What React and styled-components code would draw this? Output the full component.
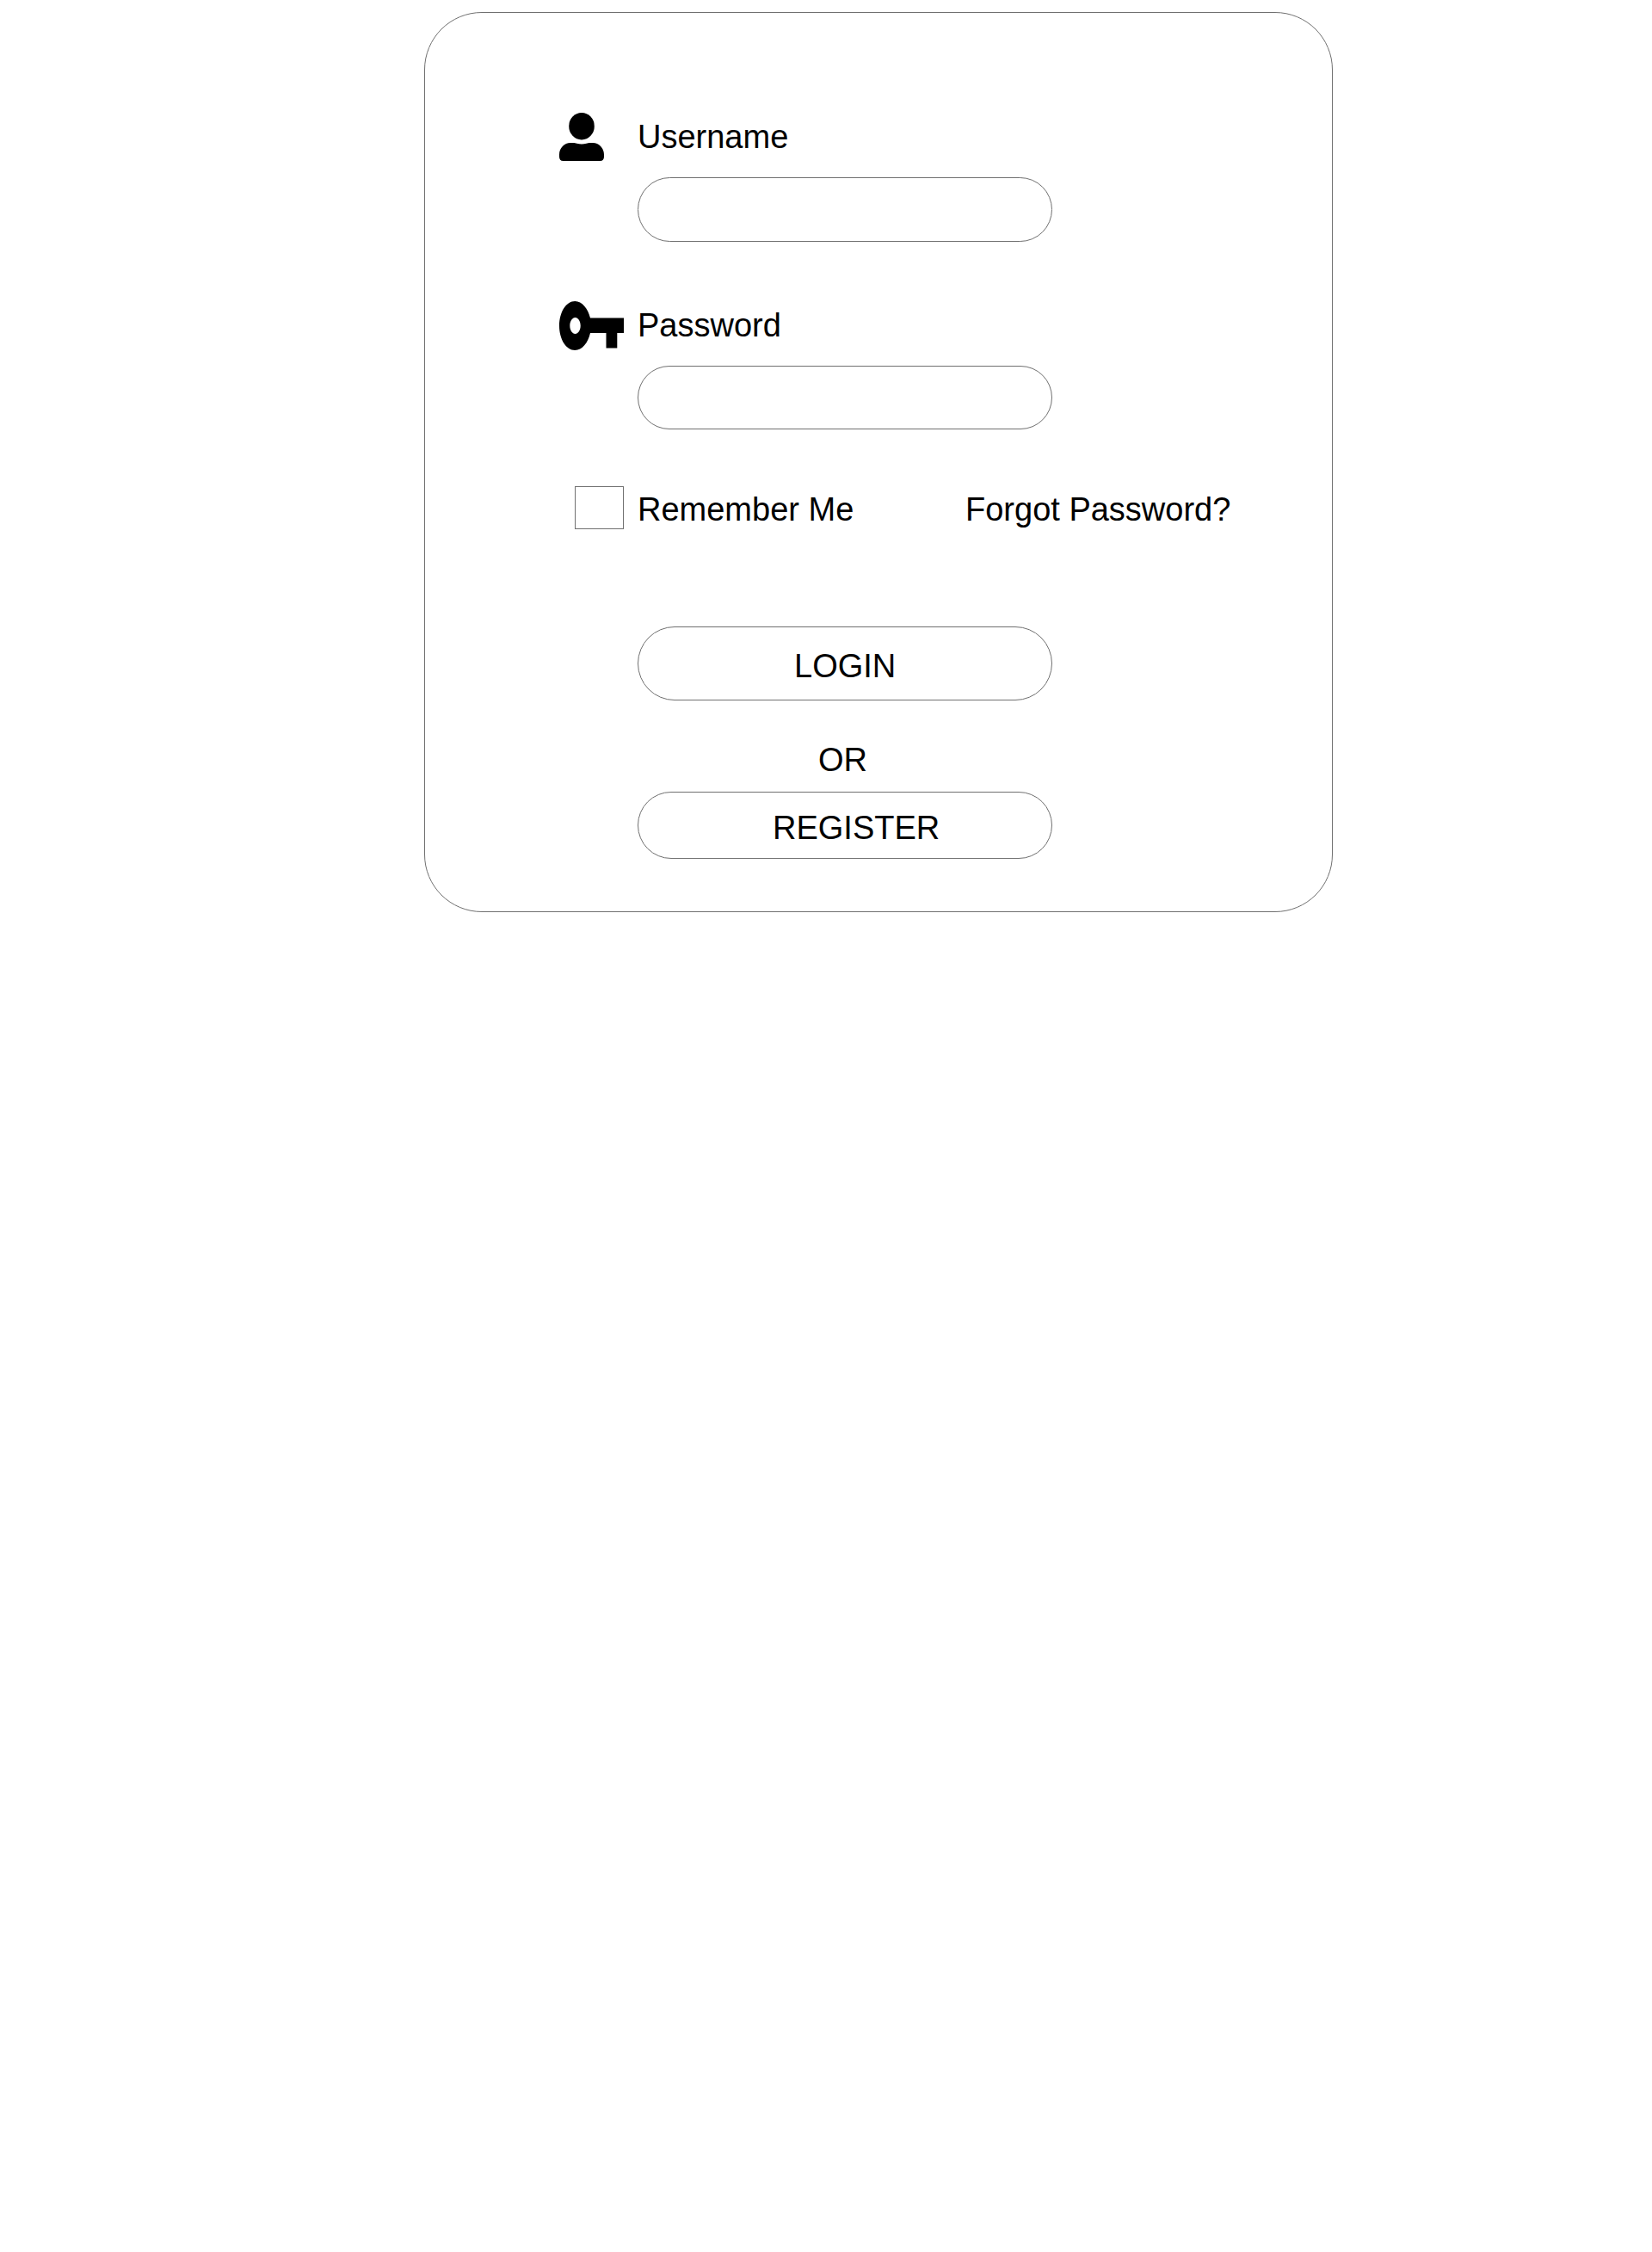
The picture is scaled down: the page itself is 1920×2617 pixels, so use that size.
import React from "react";
import styled, { createGlobalStyle } from "styled-components";

const Global = createGlobalStyle`
  * { box-sizing: border-box; }
  html { background: #fff; }
  body { margin: 0; background: #fff; }
`;

const Page = styled.main`
  display: flex;
  min-height: 2617px;
  padding: 14px 0 0 493px;
  align-items: flex-start;
  background: #fff;
  color: #000;
  font: 38px/44px "Liberation Sans", Arial, Helvetica, sans-serif;
`;

const Card = styled.form`
  display: flex;
  flex-direction: column;
  width: 1056px;
  height: 1046px;
  padding: 116px 0 0 156px;
  border: 1px solid #707070;
  border-radius: 67px;
`;

const Field = styled.div`
  display: grid;
  grid-template-columns: 91px 482px;
  grid-template-rows: 75px auto;
  margin-bottom: ${(p) => p.$after}px;
`;

const IconCell = styled.span`
  display: block;
  height: 58px;
  svg { display: block; }
`;

const Label = styled.label`
  padding-top: 6px;
  white-space: nowrap;
`;

const Input = styled.input`
  grid-column: 2;
  width: 482px;
  height: ${(p) => p.$height}px;
  padding: 0 30px;
  border: 1px solid #707070;
  border-radius: 38px;
  background: #fff;
  font: inherit;
  outline: none;
`;

const Options = styled.div`
  display: flex;
  align-items: flex-start;
  height: 50px;
  padding-left: 18px;
  margin-bottom: 113px;
`;

const Checkbox = styled.input`
  appearance: none;
  width: 57px;
  height: 50px;
  margin: 0 16px 0 0;
  border: 1px solid #707070;
  background: #fff;
`;

const OptionText = styled.label`
  width: 381px;
  padding-top: 5px;
  white-space: nowrap;
`;

const Forgot = styled.a`
  padding-top: 5px;
  color: inherit;
  text-decoration: none;
  white-space: nowrap;
`;

const Actions = styled.div`
  display: flex;
  flex-direction: column;
  width: 482px;
  margin-left: 91px;
`;

const Button = styled.button`
  display: flex;
  align-items: flex-start;
  width: 482px;
  height: ${(p) => p.$height}px;
  padding: ${(p) => p.$top}px 0 0 ${(p) => p.$left}px;
  border: 1px solid #707070;
  border-radius: 43px;
  background: #fff;
  color: inherit;
  font: inherit;
  text-align: left;
`;

const Or = styled.span`
  height: 106px;
  padding: 47px 0 0 210px;
`;

function UserIcon() {
  return (
    <svg width="53" height="58" viewBox="0 0 53 58" aria-hidden="true">
      <ellipse cx="26" cy="15.7" rx="14.8" ry="15.7" />
      <path d="M13 35 C17 34.7 18.500 35 20.500 35.700 C24 36.700 28 36.700 31.500 35.700 C33.500 35 35 34.700 39 35 C46 35 52 41 52 48.500 V51 Q52 56 47.500 56 H4.500 Q0 56 0 51 V48.500 C0 41 6 35 13 35Z" />
    </svg>
  );
}

function KeyIcon() {
  return (
    <svg width="76" height="58" viewBox="0 0 76 58" aria-hidden="true">
      <path
        fillRule="evenodd"
        d="M36 19.500 C33.300 8.500 26.500 0 18.300 0 C8 0 0 12.700 0 28.500 C0 44.300 8 57 18.300 57 C26.500 57 33.300 48.500 36 37 H54.500 V54.500 H67.300 V37 H75 V19.500Z M18.500 38 C15.200 38 12.300 33.700 12.300 28.500 C12.300 23.300 15.200 19 18.500 19 C21.900 19 24.700 23.300 24.700 28.500 C24.700 33.700 21.900 38 18.500 38Z"
      />
    </svg>
  );
}

export default function App() {
  return (
    <>
      <Global />
      <Page>
        <Card onSubmit={(e) => e.preventDefault()}>
          <Field $after={69}>
            <IconCell><UserIcon /></IconCell>
            <Label htmlFor="username">Username</Label>
            <Input id="username" $height={75} />
          </Field>
          <Field $after={66}>
            <IconCell><KeyIcon /></IconCell>
            <Label htmlFor="password">Password</Label>
            <Input id="password" type="password" $height={74} />
          </Field>
          <Options>
            <Checkbox id="remember" type="checkbox" />
            <OptionText htmlFor="remember">Remember Me</OptionText>
            <Forgot href="#">Forgot Password?</Forgot>
          </Options>
          <Actions>
            <Button type="submit" $height={86} $top={23} $left={181}>LOGIN</Button>
            <Or>OR</Or>
            <Button type="button" $height={78} $top={19} $left={156}>REGISTER</Button>
          </Actions>
        </Card>
      </Page>
    </>
  );
}
